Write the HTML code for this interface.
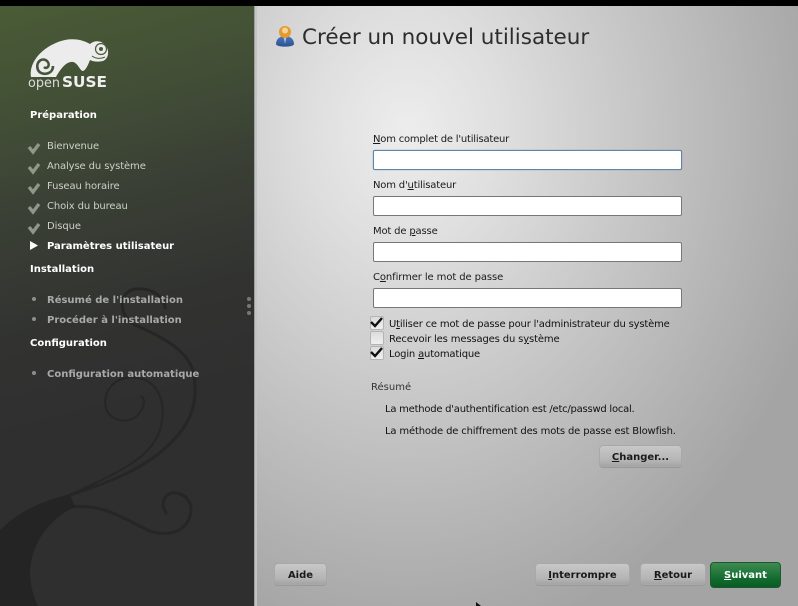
<!DOCTYPE html>
<html><head><meta charset="utf-8"><style>
html,body{margin:0;padding:0;background:#000}
#r{position:relative;width:798px;height:606px;overflow:hidden;font-family:"DejaVu Sans","Liberation Sans",sans-serif;font-size:10px;color:#111}
#r div{position:absolute;white-space:nowrap}
#side{left:0;top:6px;width:254px;height:600px;background:linear-gradient(165deg,#4a5c36 0%,#424e36 18%,#3a4035 32%,#323331 50%,#2f2f2f 65%)}
#sep{left:254px;top:6px;width:3px;height:600px;background:linear-gradient(90deg,#8c8c8c,#cfcfcf 60%,#bbb)}
#main{left:257px;top:6px;width:541px;height:600px;background:radial-gradient(ellipse 430px 520px at 150px 125px,#ededed 0%,#dfdfdf 22%,#c9c9c9 50%,#b4b4b4 78%,#a4a4a4 100%)}
.h{left:30px;color:#fff;font-weight:bold;font-size:10px}
.s{left:47px;color:#ccd0c8;font-size:10px;letter-spacing:-.11px}
.g{left:47px;color:#a9a9a9;font-weight:bold;font-size:10px}
.d{left:32px;width:4px;height:4px;border-radius:50%;background:#8e8e8e}
.l{left:373px;color:#1a1a1a;font-size:10px}
.i{left:373px;width:307px;height:18px;background:#fff;border:1px solid #777;border-radius:2px}
.c{left:370px;width:12px;height:12px;background:linear-gradient(#dcdcdc,#f0f0f0);border:1px solid #b4b4b4;border-radius:2px}
.t{left:389px;color:#111;font-size:10px}
.b{height:22px;line-height:24px;text-align:center;font-weight:bold;font-size:10px;color:#1a1a1a;border-radius:4px;background:linear-gradient(#c8c8c8,#b4b4b4 75%,#a4a4a4);border:1px solid #a8a8a8;box-sizing:border-box;box-shadow:0 1px 0 #999}
u{text-decoration:underline}
svg{position:absolute;overflow:visible}
</style></head><body><div id="r">
<div id="side"></div>
<svg style="left:0;top:0" width="254" height="606" viewBox="0 0 254 606" fill="none">
<path d="M70 495C110 482 150 468 178 435C195 415 197 395 194 375C190 352 165 338 135 325C118 316 118 292 135 289C152 287 166 298 165 309" stroke="#262626" stroke-width="3"/>
<path d="M60 500C95 482 135 468 152 445C165 428 165 405 158 392C150 378 135 375 122 379C106 384 101 403 109 414C118 424 135 423 142 409C145 403 144 398 141 396" stroke="#262626" stroke-width="2"/>
<path d="M70 507C105 503 125 520 150 531C170 538 190 530 191 510C191 497 180 492 172 493C163 495 160 505 167 514" stroke="#262626" stroke-width="3"/>
<path d="M0 530C10 520 22 512 33 507C45 501 56 498 70 494L75 507C55 515 30 540 30 575C31 590 35 600 38 606H0Z" fill="#242424"/>
</svg>
<div id="sep"></div>
<div id="main"></div>

<svg style="left:0;top:0" width="254" height="100" viewBox="0 0 254 100">
<path d="M31 77C29 65 38 50 58 42C68 38 80 38 90 44C94 40 102 40 106 46C110 52 108 59 103 61C98 62 94 62 90 60C88 65 86 70 83 71C80 71 78 63 73 62C66 61 60 70 56 77Z" fill="#ececec"/>
<circle cx="101" cy="49" r="5.5" fill="none" stroke="#4a5a3a" stroke-width="1.2"/><circle cx="101" cy="49" r="2" fill="#4a5a3a"/>
<path d="M92 56C96 59 101 59 105 57" stroke="#4a5a3a" stroke-width="1" fill="none"/>
<path d="M53 66C53 75 41 76 38 70C35 62 42 57 47 61C51 65 47 70 44 67" fill="none" stroke="#46553a" stroke-width="2.6"/>
<text x="28" y="87" fill="#dcdcdc" font-size="13" font-family="DejaVu Sans" textLength="32" lengthAdjust="spacingAndGlyphs">open</text>
<text x="62" y="87" fill="#efefef" font-size="15" font-weight="bold" font-family="DejaVu Sans" textLength="45" lengthAdjust="spacingAndGlyphs">SUSE</text>
</svg>

<div class="h" style="top:109px">Préparation</div>
<svg style="left:27px;top:140px" width="14" height="90" fill="none" stroke="#8f968a" stroke-width="3.4">
<path d="M2 7L6 12L12 4"/><path d="M2 27L6 32L12 24"/><path d="M2 47L6 52L12 44"/><path d="M2 67L6 72L12 64"/><path d="M2 87L6 92L12 84"/></svg>
<div class="s" style="top:139px">Bienvenue</div>
<div class="s" style="top:159px">Analyse du système</div>
<div class="s" style="top:179px">Fuseau horaire</div>
<div class="s" style="top:199px">Choix du bureau</div>
<div class="s" style="top:219px">Disque</div>
<svg style="left:30px;top:241px" width="9" height="9"><path d="M0 0L8 4.500L0 9Z" fill="#fff"/></svg>
<div class="s" style="top:239px;color:#fff;font-weight:bold;letter-spacing:0">Paramètres utilisateur</div>
<div class="h" style="top:263px">Installation</div>
<div class="d" style="top:297px"></div><div class="g" style="top:294px">Résumé de l'installation</div>
<div class="d" style="top:317px"></div><div class="g" style="top:314px">Procéder à l'installation</div>
<div class="h" style="top:337px">Configuration</div>
<div class="d" style="top:371px"></div><div class="g" style="top:368px">Configuration automatique</div>
<div style="left:247px;top:297px;width:4px;height:4px;border-radius:50%;background:#777"></div>
<div style="left:247px;top:304px;width:4px;height:4px;border-radius:50%;background:#777"></div>
<div style="left:247px;top:311px;width:4px;height:4px;border-radius:50%;background:#777"></div>

<svg style="left:275px;top:24px" width="20" height="24" viewBox="0 0 20 24">
<defs><linearGradient id="bd" x1="0" y1="0" x2="0" y2="1"><stop offset="0" stop-color="#4a78bc"/><stop offset="1" stop-color="#2c5090"/></linearGradient></defs>
<path d="M1 20C1 15 5 12 10 12C15 12 19 15 19 20C19 23.500 1 23.500 1 20Z" fill="url(#bd)"/>
<path d="M9 13L10 20L11 13Z" fill="#dbe6f2"/>
<circle cx="10" cy="8" r="6" fill="#e39a30"/><circle cx="10" cy="6.500" r="3" fill="#f8d494"/></svg>
<div style="left:302px;top:25px;font-size:21.5px;color:#2d2d2d;line-height:26px">Créer un nouvel utilisateur</div>

<div class="l" style="top:132px;letter-spacing:-.21px"><u>N</u>om complet de l'utilisateur</div>
<div class="i" style="top:150px;border-color:#5f86a8;box-shadow:0 0 1px #5f86a8"></div>
<div class="l" style="top:178px;letter-spacing:-.18px">Nom d'<u>u</u>tilisateur</div>
<div class="i" style="top:196px"></div>
<div class="l" style="top:224px;letter-spacing:-.17px">Mot de <u>p</u>asse</div>
<div class="i" style="top:242px"></div>
<div class="l" style="top:270px;letter-spacing:-.1px">C<u>o</u>nfirmer le mot de passe</div>
<div class="i" style="top:288px"></div>

<div class="c" style="top:316px"></div>
<div class="c" style="top:331px"></div>
<div class="c" style="top:346px"></div>
<svg style="left:369px;top:316px" width="15" height="45" fill="none" stroke="#111" stroke-width="2.4"><path d="M2 6L6 10L13 2"/><path d="M2 36L6 40L13 32"/></svg>
<div class="t" style="top:317px;letter-spacing:-.18px">U<u>t</u>iliser ce mot de passe pour l'administrateur du système</div>
<div class="t" style="top:332px;letter-spacing:-.15px">Recevoir les messages du s<u>y</u>stème</div>
<div class="t" style="top:347px;letter-spacing:-.18px">Login <u>a</u>utomatique</div>

<div style="left:371px;top:382px;color:#333">Résumé</div>
<div style="left:385px;top:404px;letter-spacing:-.24px">La methode d'authentification est /etc/passwd local.</div>
<div style="left:385px;top:426px;letter-spacing:-.16px">La méthode de chiffrement des mots de passe est Blowfish.</div>
<div class="b" style="left:599px;top:445px;width:83px"><u>C</u>hanger...</div>

<div class="b" style="left:274px;top:563px;width:53px">Aide</div>
<div class="b" style="left:535px;top:563px;width:95px"><u>I</u>nterrompre</div>
<div class="b" style="left:640px;top:563px;width:66px"><u>R</u>etour</div>
<div class="b" style="left:710px;top:562px;width:71px;height:26px;line-height:25px;color:#fff;background:linear-gradient(#3f8a52,#0f6a2c 70%,#0c5a26);border-color:#1c5a2c;box-shadow:none"><u>S</u>uivant</div>
<svg style="left:476px;top:602px" width="6" height="4"><path d="M0 0L5 4H0Z" fill="#111"/></svg>
</div>
<style>
#r .s,#r .l,#r .t{margin-top:2px}
#r .h,#r .g{margin-top:1px}
</style>
</body></html>
